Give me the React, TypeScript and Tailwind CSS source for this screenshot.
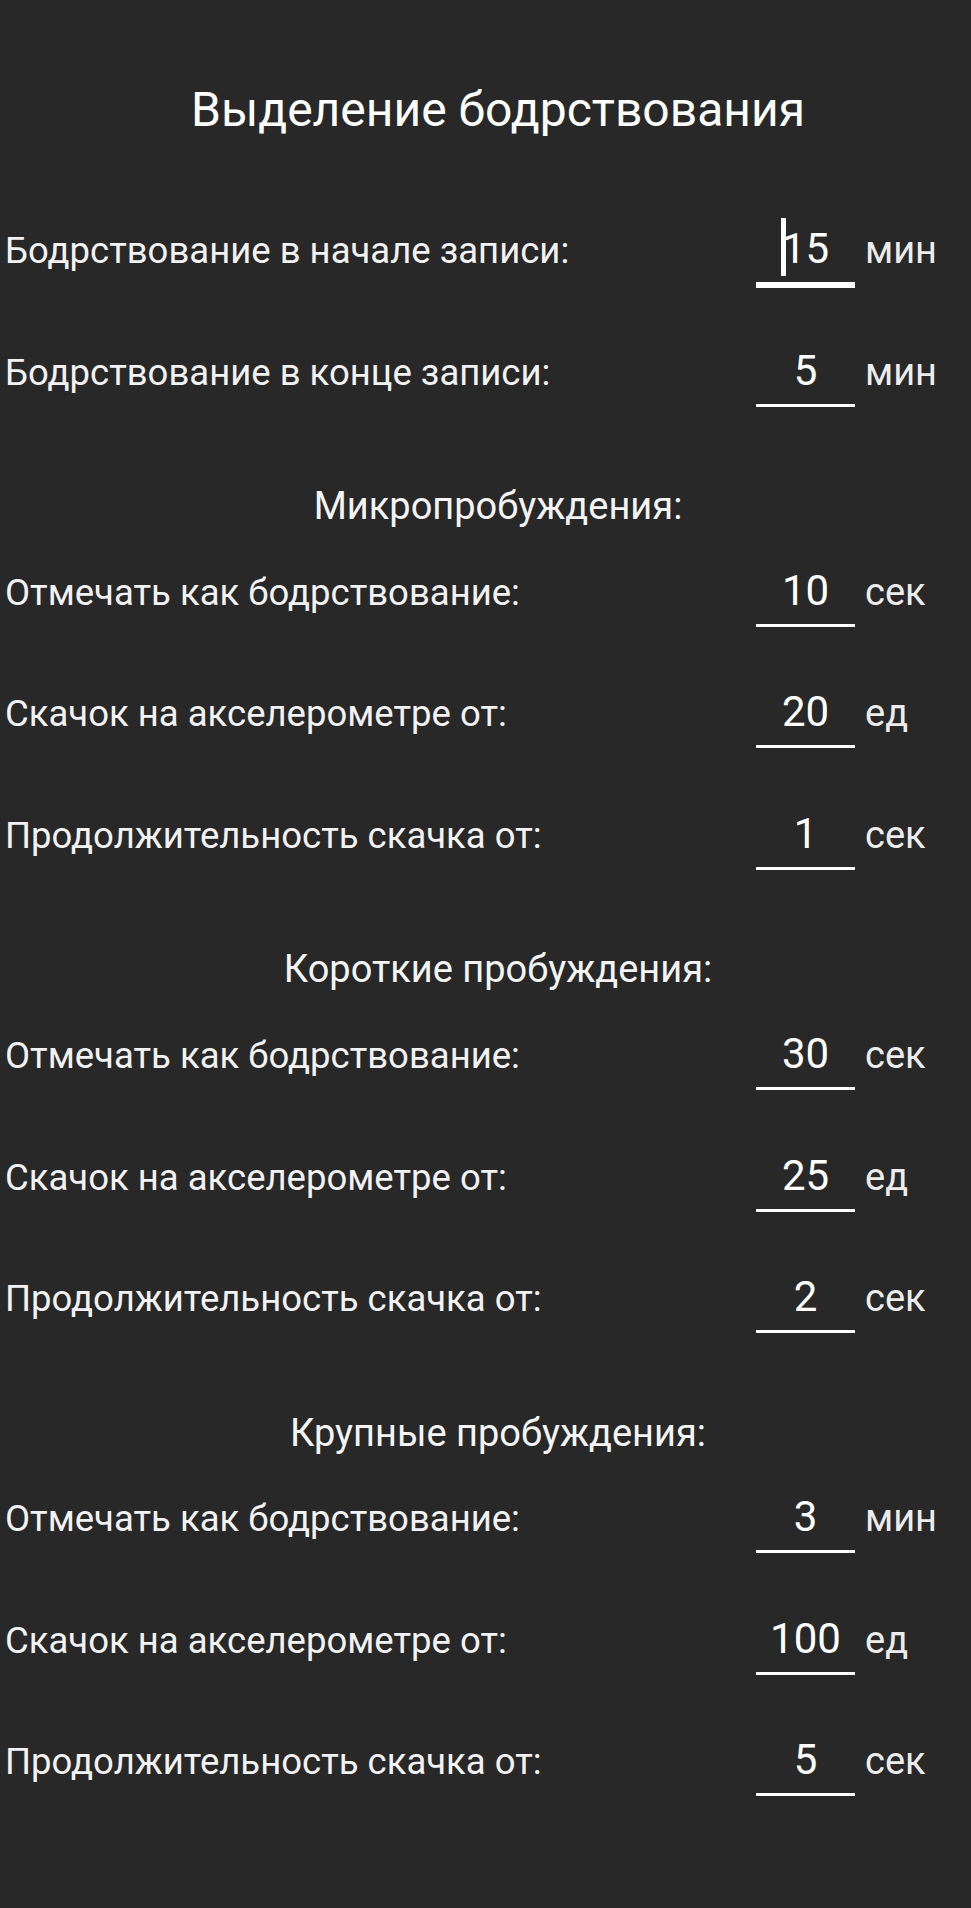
import React from "react";

type Row = { label: string; value: string; unit: string; focused?: boolean };
type Section = { heading?: string; rows: Row[] };

const sections: Section[] = [
  {
    rows: [
      { label: "Бодрствование в начале записи:", value: "15", unit: "мин", focused: true },
      { label: "Бодрствование в конце записи:", value: "5", unit: "мин" },
    ],
  },
  {
    heading: "Микропробуждения:",
    rows: [
      { label: "Отмечать как бодрствование:", value: "10", unit: "сек" },
      { label: "Скачок на акселерометре от:", value: "20", unit: "ед" },
      { label: "Продолжительность скачка от:", value: "1", unit: "сек" },
    ],
  },
  {
    heading: "Короткие пробуждения:",
    rows: [
      { label: "Отмечать как бодрствование:", value: "30", unit: "сек" },
      { label: "Скачок на акселерометре от:", value: "25", unit: "ед" },
      { label: "Продолжительность скачка от:", value: "2", unit: "сек" },
    ],
  },
  {
    heading: "Крупные пробуждения:",
    rows: [
      { label: "Отмечать как бодрствование:", value: "3", unit: "мин" },
      { label: "Скачок на акселерометре от:", value: "100", unit: "ед" },
      { label: "Продолжительность скачка от:", value: "5", unit: "сек" },
    ],
  },
];

function FieldRow({ row }: { row: Row }) {
  return (
    <div className="flex h-[121.5px] items-baseline">
      <div className="flex-1 pl-[5px] text-[36.5px] text-[#f2f2f2]">{row.label}</div>
      <div
        className={
          "w-[99px] border-white pb-[12px] text-center text-[42px] leading-[42px] text-white " +
          (row.focused ? "border-b-[6px]" : "border-b-[3px]")
        }
      >
        <span className="relative">
          {row.focused && (
            <span className="absolute left-[-1px] top-[-6px] h-[58px] w-[5px] bg-white" />
          )}
          {row.value}
        </span>
      </div>
      <div className="w-[116px] pl-[10px] text-[38px] text-[#ececec]">{row.unit}</div>
    </div>
  );
}

export default function App() {
  return (
    <div
      className="min-h-[1908px] w-full bg-[#282828] text-white"
      style={{ fontFamily: "Roboto, 'Noto Sans', sans-serif" }}
    >
      <div className="h-[222.3px] pl-[25px] pt-[74px] text-center text-[48px] text-white">
        Выделение бодрствования
      </div>
      {sections.map((s, i) => (
        <div key={i}>
          {s.heading && (
            <div className="h-[98.7px] pl-[25px] pt-[13px] text-center text-[38px] text-[#f4f4f4]">
              {s.heading}
            </div>
          )}
          {s.rows.map((r, j) => (
            <FieldRow key={j} row={r} />
          ))}
        </div>
      ))}
    </div>
  );
}
